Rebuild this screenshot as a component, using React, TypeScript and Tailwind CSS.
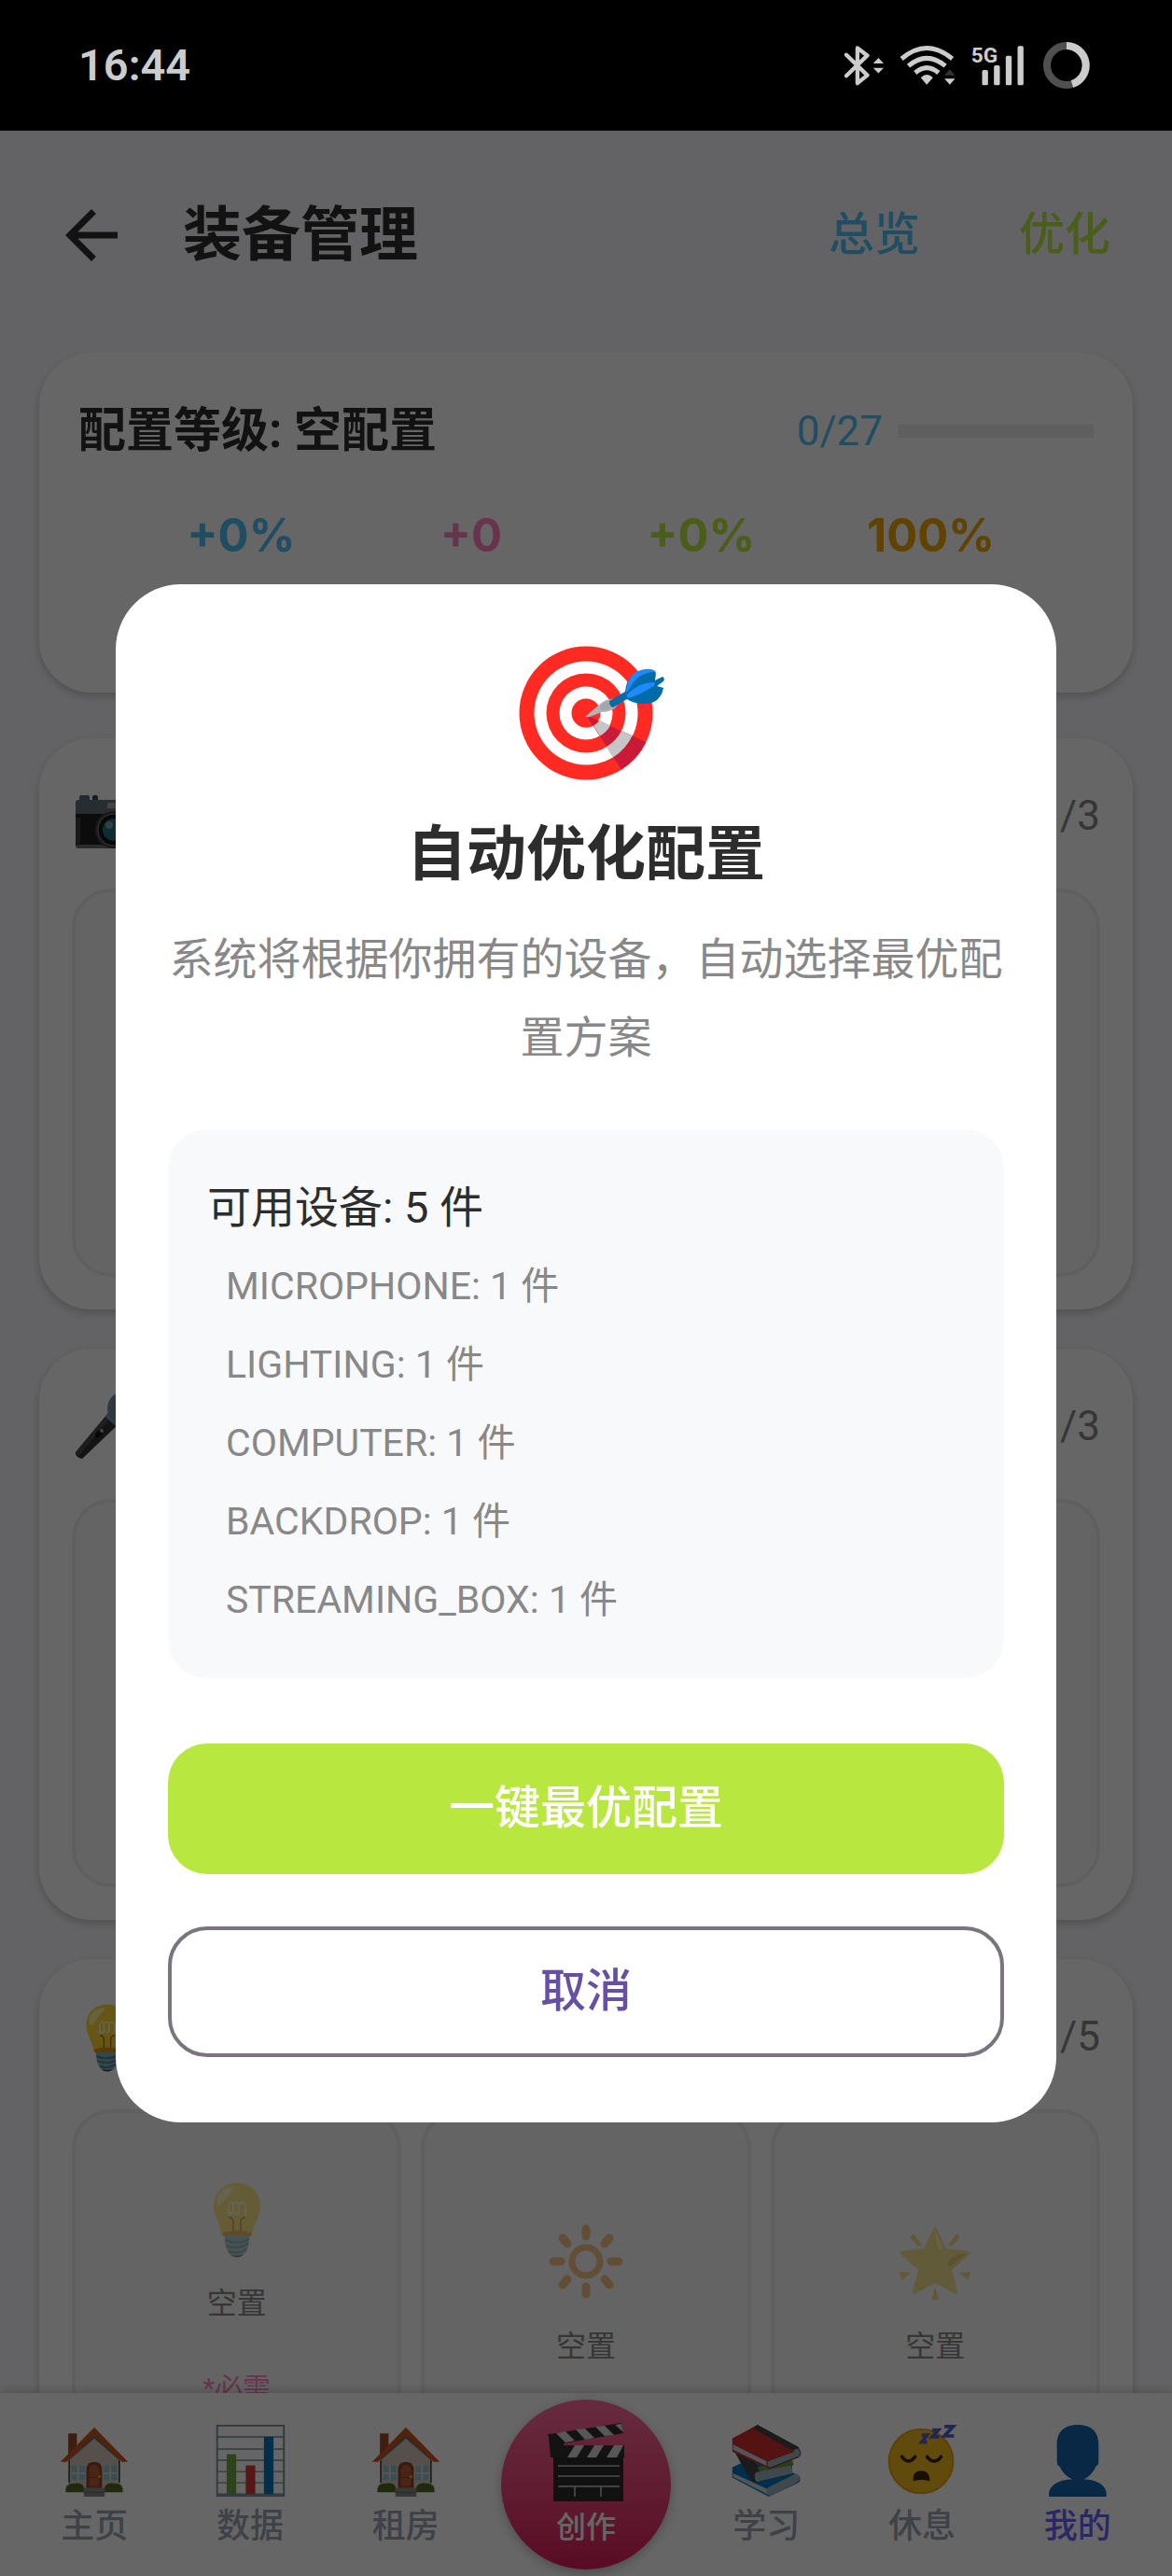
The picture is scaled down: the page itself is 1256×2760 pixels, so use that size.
import type { ReactNode } from 'react';

type IconProps = { className?: string };

function TargetIcon({ className }: IconProps) {
  return (
    <svg viewBox="-5 28 220 164" className={className} aria-hidden="true">
      <circle cx="105" cy="110" r="71.5" fill="#ff2b23" />
      <circle cx="105" cy="110" r="55.5" fill="#fff" />
      <circle cx="105" cy="110" r="42.5" fill="#ff2b23" />
      <circle cx="105" cy="110" r="28.5" fill="#fff" />
      <circle cx="105" cy="110" r="15.5" fill="#ff2b23" />
      {/* dart shadow across the rings */}
      <path d="M105 112 L169.500 141 A71.500 71.500 0 0 1 143 170.500 Z" fill="#cb1a38" />
      <path d="M154.500 134.500 A55.500 55.500 0 0 1 134 157.500 L127 146 A42.500 42.500 0 0 0 143 129 Z" fill="#c6c6c6" />
      <path d="M131 123.500 A28.500 28.500 0 0 1 120 134.500 L113 123.500 A15.500 15.500 0 0 0 119.500 117.500 Z" fill="#c6c6c6" />
      <path d="M105 113 L118 102 Q127 93 137 95 L139 101 Q134 109 122 109 L109 114 Q104 115 105 113Z" fill="#b0b4b8" />
      <path d="M120 102 Q128 95 136 98 L137 101 Q130 107 121 107Z" fill="#92999e" opacity=".5" />
      <path d="M130 97 L147 87 Q149 66 168 64 Q176 63 180 67 L179 75 L187 71 Q190 73 188 76 L181 81 L188 83 Q185 98 171 100 Q157 101 149 95 L134 104 Q130 103 130 97Z" fill="#006caa" />
      <path d="M148 91 Q163 76 178 77 Q180 81 176 82 Q160 92 150 94Z M148 88 Q149 66 168 63 Q177 62 180 66 Q161 65 151 85Z" fill="#2189ff" />
    </svg>
  );
}

function CameraIcon({ className }: IconProps) {
  return (
    <svg viewBox="0 0 84 84" className={className} aria-hidden="true">
      <rect x="8" y="20" width="11" height="8" rx="2" fill="#546e7a" />
      <rect x="22" y="20" width="6" height="8" rx="2" fill="#37474f" />
      <rect x="4" y="25" width="80" height="52" rx="3" fill="#62727b" />
      <rect x="4" y="40" width="80" height="33" fill="#202020" />
      <rect x="4" y="44" width="5" height="28" fill="#424242" />
      <rect x="38" y="28" width="16" height="6" fill="#b0a79e" />
      <circle cx="45" cy="57" r="20" fill="#424242" />
      <circle cx="45" cy="57" r="17" fill="#151515" stroke="#8a8a8a" />
      <circle cx="45" cy="57" r="12" fill="#257080" />
      <circle cx="40" cy="52" r="4" fill="#6aa9b5" />
    </svg>
  );
}

function MicIcon({ className }: IconProps) {
  return (
    <svg viewBox="0 0 84 84" className={className} aria-hidden="true">
      <path d="M4 70 L43 23 L55 35 L11 77 Q3 75 4 70Z" fill="#333" />
      <path d="M4 70 L41 26 L44 30 L7 74Z" fill="#4c4c4c" />
      <path d="M36 32 L43 22 L57 37 L48 43Z" fill="#5da4bd" />
      <circle cx="56" cy="23" r="18" fill="#78909c" />
      <ellipse cx="29" cy="50" rx="5" ry="3" transform="rotate(-48 29 50)" fill="#111" />
      <circle cx="32" cy="47" r="2" fill="#aaa" />
    </svg>
  );
}

function BulbIcon({ className }: IconProps) {
  return (
    <svg viewBox="0 0 84 84" className={className} aria-hidden="true">
      <path d="M42 4 C28 4 17 14 17 29 C17 40 25 48 26 60 H58 C59 48 67 40 67 29 C67 14 56 4 42 4Z" fill="#fdd835" />
      <path d="M36 8 C26 9 19 18 21 28 C26 31 30 17 37 13 Q41 9 36 8Z" fill="#fff59d" />
      <g fill="none" strokeWidth="1.500">
        <path d="M33 40 Q39 42 38 47 V59 M51 40 Q45 42 46 47 V59" stroke="#b26a00" />
        <path d="M33 40 V27 Q36 22 38 27 V35 Q36 41 34 35 M38 27 Q41 22 44 27 V35 Q42 41 40 35 M44 27 Q48 22 51 27 V40" stroke="#fffde7" />
      </g>
      <path d="M27 57 Q42 53 57 57 V61 H27Z" fill="#e88b00" />
      <path d="M29 60 H55 Q56 74 49 81 Q42 86 35 81 Q28 74 29 60Z" fill="#82aeb8" />
      <path d="M29 65 Q43 71 55 64 M30 71 Q43 76 54 69 M33 77 Q43 81 52 75" fill="none" stroke="#4d7f8c" strokeWidth="2" />
      <path d="M35 81 Q42 86 49 81 Q42 82 35 81Z" fill="#37474f" />
    </svg>
  );
}

function BrightIcon({ className }: IconProps) {
  return (
    <svg viewBox="0 0 84 84" className={className} aria-hidden="true">
      <circle cx="42" cy="42" r="15" fill="none" stroke="#f5a03c" strokeWidth="7" />
      <g stroke="#f5a03c" strokeWidth="9" strokeLinecap="round">
        <path d="M42 7V15 M42 69V77 M7 42H15 M69 42H77 M17 17L22 23 M67 17L62 23 M17 67L22 61 M67 67L62 61" />
      </g>
    </svg>
  );
}

function StarIcon({ className }: IconProps) {
  return (
    <svg viewBox="0 0 84 84" className={className} aria-hidden="true">
      <path d="M42 4 Q43 4 44 7 L54 28 L78 31 Q82 32 78 35 L60 51 L66 75 Q66 78 62 76 L42 65 L22 76 Q18 78 18 75 L24 51 L6 35 Q2 32 6 31 L30 28 L40 7 Q41 4 42 4Z" fill="#f2d64b" />
      <path d="M42 7 Q43 24 47 29 Q50 31 49 25Z" fill="#fff59d" />
      <path d="M76 33 Q60 35 56 42 Q55 49 60 46Z" fill="#cfae20" />
      <path d="M15 16 L19 12 L28 24 L24 26Z M69 16 L65 12 L56 24 L60 26Z M4 53 L17 54 L6 62Z M80 53 L67 54 L78 62Z M42 69 L46 83 H38Z" fill="#f2c94b" />
    </svg>
  );
}

function HouseIcon({ className }: IconProps) {
  return (
    <svg viewBox="0 0 84 84" className={className} aria-hidden="true">
      <path d="M12 11H22V29L12 38Z" fill="#a04a2c" />
      <path d="M13 36 L42 10 L71 36 V76 H13Z" fill="#d5c8bb" />
      <path d="M13 42 V36 L42 9 L71 36 V42 L42 17Z" fill="#786a5e" />
      <path d="M3 44 L42 4 L81 44 H74 L42 12 L10 44Z" fill="#d3541f" />
      <path d="M13 42V68 M71 42V68" stroke="#302822" strokeWidth="1.500" />
      <g fill="#90c4cd">
        <rect x="16" y="48" width="15" height="17" />
        <rect x="53" y="48" width="15" height="17" />
      </g>
      <path d="M23.500 48V65 M16 57H31 M60.500 48V65 M53 57H68" stroke="#e1d8ce" strokeWidth="2" />
      <path d="M33 74 V51 Q34 44 42 44 Q50 44 51 51 V74Z" fill="#8d4526" />
      <path d="M36 72 V53 Q37 47 42 47 Q47 47 48 53 V72Z" fill="#b45c38" />
      <path d="M36 62H48" stroke="#8d4526" />
      <circle cx="48" cy="61" r="1.500" fill="#ffc107" />
      <path d="M9 79 Q8 69 17 69 Q28 67 30 73 V79Z M54 79 V73 Q57 67 67 69 Q76 69 75 79Z" fill="#4f661d" />
      <path d="M30 74H54V84H30Z" fill="#898989" />
      <path d="M30 79H54" stroke="#666" />
    </svg>
  );
}

function ChartIcon({ className }: IconProps) {
  return (
    <svg viewBox="0 0 84 84" className={className} aria-hidden="true">
      <rect x="4" y="2" width="77" height="81" fill="none" stroke="#78909c" strokeWidth="2" />
      <path d="M4 15H81M4 29H81M4 42H81M4 55H81M4 68H81M4 81H81" stroke="#78909c" strokeWidth="1.500" />
      <rect x="15" y="35" width="11" height="46" rx="1" fill="#71aa44" />
      <rect x="37" y="48" width="11" height="33" rx="1" fill="#d93a30" />
      <rect x="58" y="15" width="11" height="66" rx="1" fill="#0277bd" />
    </svg>
  );
}

function ClapperIcon({ className }: IconProps) {
  return (
    <svg viewBox="0 0 84 84" className={className} aria-hidden="true">
      <path d="M3 12 L80 0 L82 11 L17 22 L8 34Z" fill="#303030" />
      <path d="M3 12 Q0 10 2 15 L4 37 H18 V20Z" fill="#303030" />
      <path d="M10 11 L20 9 L30 19 L20 21Z M31 7 L41 6 L51 16 L41 18Z M52 4 L62 3 L72 13 L62 14Z M73 2 L80 1 L82 10Z" fill="#d9d9d9" />
      <path d="M4 37 H82 V84 H7 V37Z" fill="#2c2c2c" />
      <path d="M16 24H83V37H5Z" fill="#303030" />
      <path d="M30 24H40L32 37H22Z M51 24H61L53 37H43Z M72 24H82L75 37H64Z" fill="#d9d9d9" />
      <path d="M12 46H78M12 57H78M12 68H78M30 68V79M58 68V79" stroke="#c5c5c5" strokeWidth="1.500" />
    </svg>
  );
}

function BooksIcon({ className }: IconProps) {
  return (
    <svg viewBox="0 0 84 84" className={className} aria-hidden="true">
      <path d="M3 50 L34 36 L80 60 Q83 65 79 68 L45 84 L3 62Z" fill="#0277bd" />
      <path d="M4 57 L45 76 L78 59 V66 L45 82 L4 61Z" fill="#cfd8dc" />
      <path d="M45 73 L77 57 Q84 64 77 68 L46 84 Q40 79 45 73Z" fill="#9eb6c1" />
      <path d="M5 31 L14 28 L34 50 L72 43 V57 L29 68 Q25 66 21 60Z" fill="#454545" />
      <path d="M32 50 L72 41 L74 47 L35 56Z" fill="#689f38" />
      <path d="M30 56 L71 48 L73 57 L31 67 Q27 60 30 56Z" fill="#9eb6c1" />
      <path d="M3 17 L32 1 L80 28 Q84 36 79 39 L46 52 L3 32Z" fill="#d32f2f" />
      <path d="M4 24 L46 45 V50 L4 30Z" fill="#cfd8dc" />
      <path d="M32 1 L80 27 L75 33 L27 5Z" fill="#444" />
      <path d="M45 42 L78 28 Q85 34 79 38 L46 51 Q40 46 45 42Z" fill="#9eb6c1" stroke="#444" />
      <path d="M3 17 L26 5 L75 32 L45 43Z" fill="#d32f2f" />
    </svg>
  );
}

function SleepIcon({ className }: IconProps) {
  return (
    <svg viewBox="0 0 84 84" className={className} aria-hidden="true">
      <circle cx="41" cy="43" r="37" fill="#f0bb22" stroke="#ee9b0c" strokeWidth="2" />
      <path d="M19 38 Q26 48 34 38 M48 38 Q56 48 64 38" fill="none" stroke="#3b2510" strokeWidth="4" strokeLinecap="round" />
      <path d="M32 66 Q31 54 41 54 Q51 54 51 66 Q42 63 32 66Z" fill="#3b2510" />
      <path d="M42 13H48L42 21H48 M54 7H61L54 15H62 M68 3H78L68 14H79" fill="none" stroke="#5360cf" strokeWidth="4" />
    </svg>
  );
}

function PersonIcon({ className }: IconProps) {
  return (
    <svg viewBox="0 0 84 84" className={className} aria-hidden="true">
      <path d="M42 1 C59 1 67 10 66 27 V45 Q66 48 63 49 Q58 60 49 64 C65 64 77 72 75 84 H9 C7 72 19 64 36 64 Q26 60 21 49 Q18 48 18 43 V27 C17 10 25 1 42 1Z" fill="#1565ad" />
    </svg>
  );
}

const stats = [
  { value: '+0%', color: 'text-[#4fc3f7]' },
  { value: '+0', color: 'text-[#ff85c0]' },
  { value: '+0%', color: 'text-[#b8e840]' },
  { value: '100%', color: 'text-[#f0a800]' },
];

const devices = [
  { name: 'MICROPHONE', count: 1 },
  { name: 'LIGHTING', count: 1 },
  { name: 'COMPUTER', count: 1 },
  { name: 'BACKDROP', count: 1 },
  { name: 'STREAMING_BOX', count: 1 },
];

type Slot = { icon?: ReactNode; required?: boolean };

const categories: { id: string; icon: ReactNode; total: number; slots: Slot[] }[] = [
  { id: 'camera', icon: <CameraIcon className="size-[84px]" />, total: 3, slots: [{}, {}, {}] },
  { id: 'microphone', icon: <MicIcon className="size-[84px]" />, total: 3, slots: [{}, {}, {}] },
  {
    id: 'lighting',
    icon: <BulbIcon className="size-[76px]" />,
    total: 5,
    slots: [
      { icon: <BulbIcon className="size-[84px]" />, required: true },
      { icon: <BrightIcon className="size-[84px]" /> },
      { icon: <StarIcon className="size-[84px]" /> },
    ],
  },
];

const leftTabs = [
  { name: '主页', icon: <HouseIcon className="size-[78px]" /> },
  { name: '数据', icon: <ChartIcon className="size-[78px]" /> },
  { name: '租房', icon: <HouseIcon className="size-[78px]" /> },
];

const rightTabs = [
  { name: '学习', icon: <BooksIcon className="size-[78px]" /> },
  { name: '休息', icon: <SleepIcon className="size-[78px]" /> },
  { name: '我的', icon: <PersonIcon className="size-[78px]" />, active: true },
];

function StatusBar() {
  return (
    <div className="flex h-[140px] shrink-0 items-center justify-between bg-black pr-[88px] pl-[84px] text-[#cccccc]">
      <span className="text-[47px] font-semibold">16:44</span>
      <div className="flex items-center gap-4">
        <svg viewBox="130 86 130 132" className="h-11 w-[43px]" aria-label="蓝牙">
          <path d="M136 118 L204 184 L172 210 V96 L204 120 L136 186" fill="none" stroke="currentColor" strokeWidth="13" strokeLinejoin="round" strokeLinecap="round" />
          <path d="M223 146 L240 128 L257 146Z M223 160 L240 178 L257 160Z" fill="currentColor" />
        </svg>
        <svg viewBox="310 86 182 132" className="h-11 w-[61px]" aria-label="Wi-Fi">
          <g fill="none" stroke="currentColor" strokeWidth="15">
            <path d="M316 131 Q397 62 479 131" />
            <path d="M338 154 Q397 104 457 154" />
            <path d="M360 176 Q397 144 435 176" />
          </g>
          <path d="M378 192 Q397 172 417 192 L397 214Z" fill="currentColor" />
          <path d="M454 184 L471 165 L488 184Z" fill="#333" />
          <path d="M454 195 L471 214 L488 195Z" fill="currentColor" />
        </svg>
        <svg viewBox="538 86 170 132" className="h-11 w-[57px] overflow-visible" aria-label="5G">
          <text x="537" y="142" fontFamily="Roboto" fontWeight="700" fontSize="68" fill="currentColor">5G</text>
          <g fill="currentColor">
            <rect x="572" y="167" width="19" height="49" rx="5" />
            <rect x="610" y="152" width="19" height="64" rx="5" />
            <rect x="648" y="121" width="19" height="95" rx="5" />
            <rect x="686" y="90" width="19" height="126" rx="5" />
          </g>
        </svg>
        <svg viewBox="0 0 50 50" className="ml-1 size-[50px]" aria-label="电量">
          <circle cx="25" cy="25" r="21" fill="none" stroke="#505050" strokeWidth="8" />
          <path d="M25 4 A21 21 0 0 1 31 45" fill="none" stroke="currentColor" strokeWidth="8" />
        </svg>
      </div>
    </div>
  );
}

function Header() {
  return (
    <header className="flex h-56 shrink-0 items-center pr-[66px] pl-14">
      <button type="button" aria-label="返回" className="mr-14 text-[#2d2d2d]">
        <svg viewBox="0 0 24 24" className="size-[84px]" fill="currentColor">
          <path d="M20 11H7.830l5.590-5.590L12 4l-8 8 8 8 1.410-1.410L7.830 13H20v-2z" />
        </svg>
      </button>
      <h1 className="flex-1 text-[63px] leading-[84px] font-bold text-[#2d2d2d]">装备管理</h1>
      <div className="flex gap-[106px] text-[49px] leading-[84px] font-medium">
        <button type="button" className="text-[#4fc3f7]">总览</button>
        <button type="button" className="text-[#b8e840]">优化</button>
      </div>
    </header>
  );
}

function SlotCard({ slot }: { slot: Slot }) {
  return (
    <div className="flex h-[416px] flex-1 flex-col items-center justify-center gap-[7px] rounded-[42px] border-4 border-[#eeeeee] bg-[#fafafa]">
      {slot.icon && (
        <>
          <div className="opacity-60">{slot.icon}</div>
          <span className="text-[32px] leading-[84px] text-[#888888]">空置</span>
          {slot.required && <span className="text-[30px] leading-[84px] text-[#ff85c0]">*必需</span>}
        </>
      )}
    </div>
  );
}

function Dialog() {
  return (
    <div className="absolute inset-0 flex items-center justify-center bg-black/60 px-[124px]">
      <div role="dialog" aria-modal="true" aria-labelledby="dialog-title" className="flex w-full flex-col rounded-[70px] bg-white px-14 pt-14 pb-[70px]">
        <TargetIcon className="mx-auto h-[164px] w-[220px]" />
        <h2 id="dialog-title" className="mt-7 text-center text-[64px] leading-[84px] font-bold text-[#2d2d2d]">自动优化配置</h2>
        <p className="mt-7 text-center text-[47px] leading-[84px] text-[#888888]">
          系统将根据你拥有的设备，自动选择最优配置方案
        </p>
        <section className="mt-14 rounded-[42px] bg-[#f8f9fb] p-[42px]">
          <h3 className="text-[47px] leading-[84px] text-[#2d2d2d]">可用设备: 5 件</h3>
          <ul className="pl-5 text-[41px] leading-[84px] text-[#888888]">
            {devices.map((device) => (
              <li key={device.name}>{device.name}: {device.count} 件</li>
            ))}
          </ul>
        </section>
        <button type="button" className="mt-[70px] h-[140px] rounded-[42px] bg-[#b8e840] text-[49px] font-medium text-white">
          一键最优配置
        </button>
        <button type="button" className="mt-14 h-[140px] rounded-[42px] border-4 border-[#79747e] text-[49px] font-medium text-[#6750a4]">
          取消
        </button>
      </div>
    </div>
  );
}

function Tab({ tab }: { tab: { name: string; icon: ReactNode; active?: boolean } }) {
  return (
    <a href="#" className={`flex flex-1 flex-col items-center gap-2 pt-1 ${tab.active ? 'text-[#6c63ff]' : 'text-[#9ca3af]'}`}>
      {tab.icon}
      <span className="text-[36px] leading-[48px] font-medium">{tab.name}</span>
    </a>
  );
}

function BottomNav() {
  return (
    <nav className="flex h-[196px] shrink-0 items-center bg-white px-[18px] shadow-[0_-2px_10px_rgba(0,0,0,0.2)]">
      {leftTabs.map((tab) => (
        <Tab key={tab.name} tab={tab} />
      ))}
      <a href="#" className="mx-[19px] flex size-[182px] flex-col items-center justify-center gap-1 rounded-full bg-linear-to-b from-[#ff6b9d] to-[#e0185c] pt-1 text-white shadow-[0_4px_12px_rgba(0,0,0,0.25)]">
        <ClapperIcon className="size-[84px]" />
        <span className="text-[32px] leading-[48px] font-medium">创作</span>
      </a>
      {rightTabs.map((tab) => (
        <Tab key={tab.name} tab={tab} />
      ))}
    </nav>
  );
}

export default function App() {
  return (
    <div className="flex h-screen flex-col overflow-hidden font-[Roboto,'Noto_Sans_CJK_SC',sans-serif]">
      <StatusBar />
      <div className="relative flex min-h-0 flex-1 flex-col bg-[#f8f8fc]">
        <Header />
        <main className="flex min-h-0 flex-1 flex-col gap-[42px] overflow-hidden px-[42px] pt-[14px]">
          {/* Overall level */}
          <section className="mb-[7px] shrink-0 rounded-[56px] bg-white px-[42px] pt-[42px] pb-[126px] shadow-[0_4px_10px_rgba(0,0,0,0.2)]">
            <div className="flex items-center leading-[84px]">
              <h2 className="flex-1 text-[51px] font-bold text-[#2d2d2d]">配置等级: 空配置</h2>
              <span className="text-[44px] text-[#4fc3f7]">0/27</span>
              <div className="ml-4 h-3.5 w-[210px] bg-[#eeeeee]" />
            </div>
            <div className="mt-7 flex justify-evenly font-[Inter,sans-serif] text-[49px] leading-[84px] font-bold">
              {stats.map((stat, i) => (
                <span key={i} className={`w-36 text-center ${stat.color}`}>{stat.value}</span>
              ))}
            </div>
          </section>

          {categories.map((category) => (
            <section key={category.id} className="shrink-0 rounded-[56px] bg-white p-[35px] shadow-[0_4px_10px_rgba(0,0,0,0.2)]">
              <div className="mb-[30px] flex h-24 items-center justify-between">
                {category.icon}
                <div className="flex gap-1 text-[44px] text-[#888888]">
                  <span>0</span>
                  <span>/{category.total}</span>
                </div>
              </div>
              <div className="flex gap-[21px]">
                {category.slots.map((slot, i) => (
                  <SlotCard key={i} slot={slot} />
                ))}
              </div>
            </section>
          ))}
        </main>
        <BottomNav />
        <Dialog />
      </div>
    </div>
  );
}
